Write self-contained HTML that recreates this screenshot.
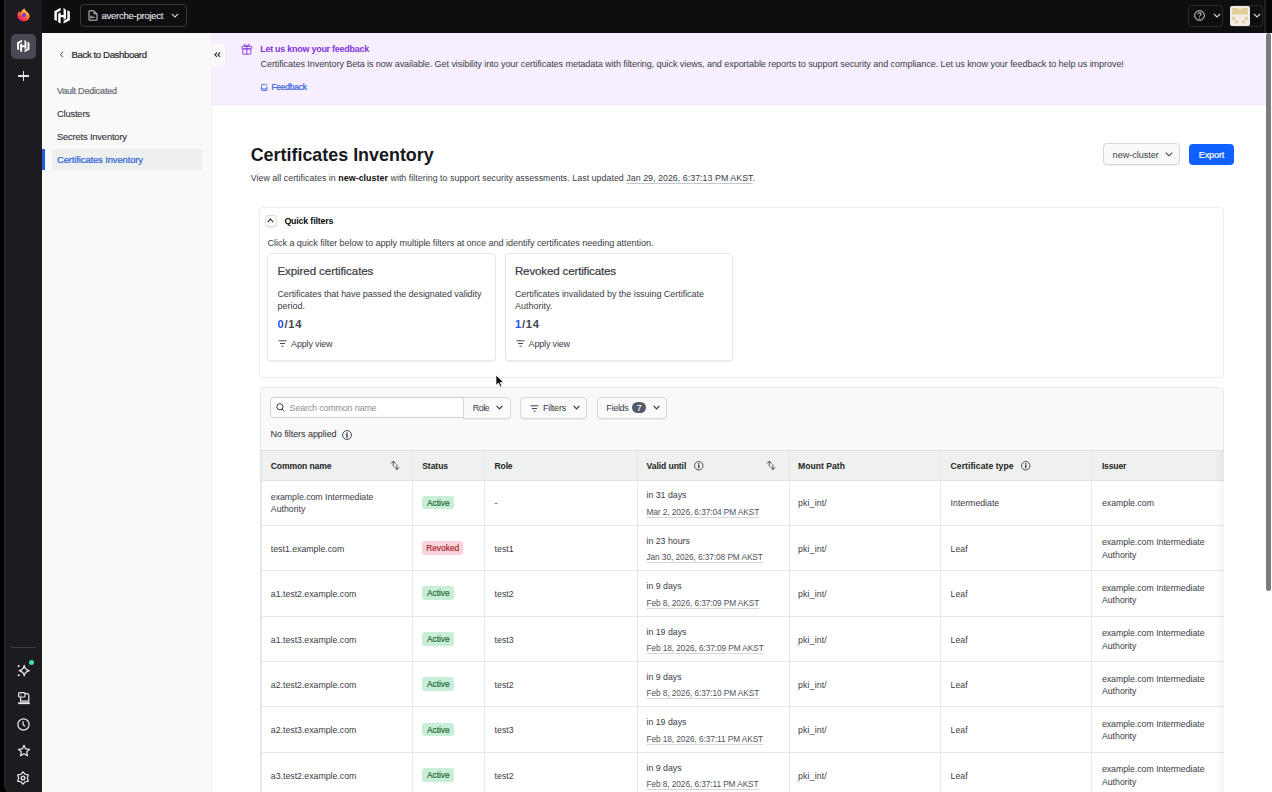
<!DOCTYPE html>
<html><head><meta charset="utf-8"><style>
html,body{margin:0;padding:0;}
body{width:1272px;height:792px;overflow:hidden;position:relative;background:#fff;font-family:"Liberation Sans",sans-serif;}
.r{position:absolute;}
.t{position:absolute;white-space:nowrap;}
.badge{border-radius:3px;font-size:8.4px;line-height:15.8px;text-align:center;-webkit-text-stroke-width:0.16px;letter-spacing:0px;}
</style></head><body>
<div class="r" style="left:0px;top:0px;width:42.00px;height:792.00px;background:#000"></div>
<div class="r" style="left:4px;top:-20px;width:38.00px;height:817.00px;background:#1c1b20;border-left:1px solid #2a2c28;border-bottom-left-radius:13px;box-sizing:border-box"></div>
<svg class="r" style="left:17px;top:8.3px" width="13" height="14" viewBox="0 0 13 14">
<defs><linearGradient id="ff" x1="0.85" y1="0.1" x2="0.3" y2="1"><stop offset="0" stop-color="#ffe95a"/><stop offset="0.4" stop-color="#ff8a2a"/><stop offset="0.75" stop-color="#ff3850"/><stop offset="1" stop-color="#d0105e"/></linearGradient></defs>
<path d="M6.5 13.4 C3 13.4 0.4 10.8 0.4 7.6 C0.4 5.6 1.2 4.2 2.2 3.3 C2.6 4.1 3.2 4.6 3.8 4.7 C4.2 3 5.6 1.3 7.6 0.4 C7.6 1.5 8.3 2.4 9.6 3.4 C11.4 4.7 12.6 6.2 12.6 8.2 C12.6 11.2 10 13.4 6.5 13.4Z" fill="url(#ff)"/>
<circle cx="6.9" cy="6.9" r="2.2" fill="#7b3ad8"/><path d="M3.8 6.8 C4.2 5.6 5.2 5 6.2 5.1 C5.4 5.6 5 6.3 5 7.2Z" fill="#ff8a2e"/></svg>
<div class="r" style="left:11px;top:34px;width:25.00px;height:25.00px;background:#4b4a52;border-radius:5px"></div>
<svg class="r" style="left:15.9px;top:39.2px" width="14.6" height="13.6" viewBox="0 0 32 32" preserveAspectRatio="none"><g fill="#fff">
<path d="M13.4 1.6 L2.4 7.9 V24.1 L6.8 26.6 V10.5 L13.4 6.7 Z"/>
<path d="M18.6 1.6 V15 H13.4 V10.1 L9.1 12.6 V28.7 L13.4 31.2 V19.2 H18.6 V24.2 L22.9 21.7 V5.6 Z"/>
<path d="M18.6 31.2 L29.6 24.9 V8.7 L25.2 6.2 V22.3 L18.6 26.1 Z"/>
</g></svg>
<div class="r" style="left:18.3px;top:75.3px;width:10.40px;height:1.30px;background:#e4e4e7"></div>
<div class="r" style="left:22.85px;top:70.9px;width:1.30px;height:10.30px;background:#e4e4e7"></div>
<div class="r" style="left:11px;top:647px;width:25.00px;height:1.00px;background:#3c3b42"></div>
<svg class="r" style="left:17px;top:664px" width="14" height="14" viewBox="0 0 14 14" fill="none" stroke="#ececef" stroke-width="1.2" stroke-linejoin="round">
<path d="M7.2 1.3 Q7.8 5.6 12.3 6.6 Q7.8 7.6 7.2 12 Q6.6 7.6 2.2 6.6 Q6.6 5.6 7.2 1.3Z"/><circle cx="1.7" cy="2" r="1.05" fill="#ececef" stroke="none"/><circle cx="1.7" cy="11.3" r="1.05" fill="#ececef" stroke="none"/></svg>
<div class="r" style="left:29px;top:660px;width:5px;height:5px;border-radius:50%;background:#43e0a0"></div>
<svg class="r" style="left:17px;top:691px" width="14" height="14" viewBox="0 0 14 14" fill="none" stroke="#ececef" stroke-width="1.2" stroke-linejoin="round">
<rect x="1.6" y="1.6" width="6.4" height="4.4" rx="1"/><path d="M8 2.6 H10.2 Q11.8 2.6 11.8 4.2 V10.2 H3.6 V6"/><circle cx="4" cy="3.8" r="0.6" fill="#ececef" stroke="none"/><path d="M1.2 12.2 H12.8" stroke-width="1.9"/></svg>
<svg class="r" style="left:16.5px;top:717.8px" width="13" height="13" viewBox="0 0 13 13" fill="none" stroke="#ececef" stroke-width="1.2">
<circle cx="6.5" cy="6.5" r="5.6"/><path d="M6.1 3.3 V6.7 L8.2 8.4"/></svg>
<svg class="r" style="left:16.5px;top:744px" width="14" height="14" viewBox="0 0 14 14" fill="none" stroke="#ececef" stroke-width="1.2" stroke-linejoin="round">
<path d="M7 1.3 L8.7 4.9 L12.6 5.3 L9.7 7.9 L10.5 11.8 L7 9.8 L3.5 11.8 L4.3 7.9 L1.4 5.3 L5.3 4.9Z"/></svg>
<svg class="r" style="left:16.2px;top:770.5px" width="14" height="14" viewBox="0 0 14 14" fill="none" stroke="#ececef" stroke-width="1.2" stroke-linejoin="round">
<path d="M7.00 0.80 L9.18 3.23 L12.37 3.90 L11.35 7.00 L12.37 10.10 L9.18 10.77 L7.00 13.20 L4.83 10.77 L1.63 10.10 L2.65 7.00 L1.63 3.90 L4.82 3.23Z"/><circle cx="7" cy="7" r="1.9"/><circle cx="7" cy="7" r="0.5" fill="#ececef" stroke="none"/></svg>
<div class="r" style="left:42px;top:0px;width:1230.00px;height:33.00px;background:#0e0e11"></div>
<svg class="r" style="left:53.3px;top:6.95px" width="18.2" height="16.9" viewBox="0 0 32 32" preserveAspectRatio="none"><g fill="#fff">
<path d="M13.4 1.6 L2.4 7.9 V24.1 L6.8 26.6 V10.5 L13.4 6.7 Z"/>
<path d="M18.6 1.6 V15 H13.4 V10.1 L9.1 12.6 V28.7 L13.4 31.2 V19.2 H18.6 V24.2 L22.9 21.7 V5.6 Z"/>
<path d="M18.6 31.2 L29.6 24.9 V8.7 L25.2 6.2 V22.3 L18.6 26.1 Z"/>
</g></svg>
<div class="r" style="left:80px;top:4px;width:107.00px;height:23.00px;border:1px solid #38383e;border-radius:4px;box-sizing:border-box"></div>
<svg class="r" style="left:88px;top:10px" width="10" height="11" viewBox="0 0 10 11" fill="none" stroke="#c9c9cf" stroke-width="1">
<path d="M1 0.8 H6 L9 3.8 V10.2 H1Z"/><path d="M6 0.8 V3.8 H9"/><path d="M3 5.6 V8.6 M3 7.2 H6.8"/></svg>
<div class="t " style="left:101.5px;top:9.07px;font-size:9.6px;line-height:13px;color:#e8e8eb;font-weight:normal;letter-spacing:-0.294px;-webkit-text-stroke-width:0.08px;">averche-project</div>
<svg class="r" style="left:171px;top:13px" width="8" height="5" viewBox="0 0 8 5" fill="none" stroke="#d8d8dc" stroke-width="1.1"><path d="M0.8 0.8 L4 4 L7.2 0.8"/></svg>
<div class="r" style="left:1188px;top:5px;width:34.50px;height:21.50px;border:1px solid #2a2a2f;border-radius:4px;box-sizing:border-box"></div>
<svg class="r" style="left:1193.5px;top:10.3px" width="11" height="11" viewBox="0 0 11 11" fill="none" stroke="#e8e8ea" stroke-width="1">
<circle cx="5.5" cy="5.5" r="4.8"/><path d="M3.9 4.2 Q4 2.7 5.5 2.7 Q7.1 2.7 7.1 4.1 Q7.1 5 6 5.5 Q5.5 5.8 5.5 6.6"/><circle cx="5.5" cy="8.2" r="0.5" fill="#e8e8ea" stroke="none"/></svg>
<svg class="r" style="left:1213px;top:12.8px" width="8" height="5" viewBox="0 0 8 5" fill="none" stroke="#e0e0e4" stroke-width="1.1"><path d="M0.8 0.8 L4 4 L7.2 0.8"/></svg>
<div class="r" style="left:1229.5px;top:5px;width:33.50px;height:21.50px;border:1px solid #2a2a2f;border-radius:4px;box-sizing:border-box"></div>
<svg class="r" style="left:1230px;top:5.5px" width="20" height="20" viewBox="0 0 20 20">
<rect width="20" height="20" rx="2" fill="#efece6"/><path d="M2 2 H8.5 V3.6 H11.5 V2 H18 V8.5 H2Z" fill="#e0cf98"/>
<rect x="2" y="11" width="3" height="3" fill="#e0cf98"/><rect x="15" y="11" width="3" height="3" fill="#e0cf98"/><rect x="5" y="14.3" width="3" height="3" fill="#e0cf98"/><rect x="12" y="14.3" width="3" height="3" fill="#e0cf98"/></svg>
<svg class="r" style="left:1253px;top:12.8px" width="8" height="5" viewBox="0 0 8 5" fill="none" stroke="#e0e0e4" stroke-width="1.1"><path d="M0.8 0.8 L4 4 L7.2 0.8"/></svg>
<div class="r" style="left:42px;top:33px;width:170.00px;height:759.00px;background:#f9f9f9"></div>
<div class="r" style="left:211px;top:33px;width:1.00px;height:759.00px;background:#f1f1f2"></div>
<svg class="r" style="left:59px;top:51px" width="5" height="7" viewBox="0 0 5 7" fill="none" stroke="#3b3d45" stroke-width="1"><path d="M4.2 0.6 L1.2 3.5 L4.2 6.4"/></svg>
<div class="t " style="left:71.5px;top:48.17px;font-size:9.6px;line-height:13px;color:#2b2d33;font-weight:normal;letter-spacing:-0.381px;-webkit-text-stroke-width:0.22px;">Back to Dashboard</div>
<div class="t " style="left:57px;top:84.88px;font-size:9.0px;line-height:13px;color:#686c76;font-weight:normal;letter-spacing:-0.205px;-webkit-text-stroke-width:0.22px;">Vault Dedicated</div>
<div class="t " style="left:57px;top:107.44px;font-size:9.4px;line-height:13px;color:#33353c;font-weight:normal;letter-spacing:-0.198px;-webkit-text-stroke-width:0.12px;">Clusters</div>
<div class="t " style="left:57px;top:129.64px;font-size:9.4px;line-height:13px;color:#33353c;font-weight:normal;letter-spacing:-0.184px;-webkit-text-stroke-width:0.12px;">Secrets Inventory</div>
<div class="r" style="left:52px;top:149px;width:150.00px;height:21.30px;background:#eeefef;border-radius:3px"></div>
<div class="r" style="left:42px;top:149px;width:2.60px;height:21.30px;background:#2459d8"></div>
<div class="t " style="left:57px;top:153.34px;font-size:9.4px;line-height:13px;color:#2a62d8;font-weight:normal;letter-spacing:-0.098px;-webkit-text-stroke-width:0.22px;">Certificates Inventory</div>
<div class="r" style="left:212px;top:33px;width:1060.00px;height:72.00px;background:#f7efff;border-bottom:1px solid #f1e4fc;box-sizing:border-box"></div>
<div class="r" style="left:211px;top:43.5px;width:14.00px;height:22.00px;background:#f9f9f9;border-radius:0 4px 4px 0;box-shadow:0.5px 0 0 #eee"></div>
<svg class="r" style="left:214.4px;top:51.7px" width="7" height="6" viewBox="0 0 7 6" fill="none" stroke="#2f3138" stroke-width="1.1"><path d="M3.1 0.5 L0.8 2.7 L3.1 4.9 M6.2 0.5 L3.9 2.7 L6.2 4.9"/></svg>
<svg class="r" style="left:240.8px;top:43.3px" width="12" height="12" viewBox="0 0 12 12" fill="none" stroke="#8a3ade" stroke-width="0.95">
<rect x="0.9" y="3.4" width="9.8" height="2.5" rx="0.5"/><rect x="1.7" y="5.9" width="8.2" height="5.3" rx="0.5"/><path d="M5.8 3.4 V11.2"/><path d="M5.8 3.4 C4.6 1.2 3.1 0.9 3.1 2.1 C3.1 3 4.5 3.4 5.8 3.4 C7.1 3.4 8.5 3 8.5 2.1 C8.5 0.9 7 1.2 5.8 3.4"/></svg>
<div class="t " style="left:260.2px;top:42.68px;font-size:9.0px;line-height:13px;color:#8434d8;font-weight:bold;letter-spacing:-0.272px;">Let us know your feedback</div>
<div class="t " style="left:260.5px;top:57.55px;font-size:9.1px;line-height:13px;color:#3b3d45;font-weight:normal;letter-spacing:-0.094px;">Certificates Inventory Beta is now available. Get visibility into your certificates metadata with filtering, quick views, and exportable reports to support security and compliance. Let us know your feedback to help us improve!</div>
<svg class="r" style="left:260.8px;top:83.8px" width="7" height="7" viewBox="0 0 7 7" fill="none" stroke="#3b68d8" stroke-width="0.9">
<path d="M4.3 0.5 H1.2 Q0.5 0.5 0.5 1.2 V5.8 Q0.5 6.5 1.2 6.5 H5.2 Q5.9 6.5 5.9 5.8 V2.4"/><path d="M0.5 4.9 H5.9"/><circle cx="5.6" cy="0.9" r="0.6" fill="#3b68d8" stroke="none"/></svg>
<div class="t " style="left:271.4px;top:81.29px;font-size:8.4px;line-height:12px;color:#2f62dc;font-weight:normal;letter-spacing:-0.183px;-webkit-text-stroke-width:0.22px;">Feedback</div>
<div class="t " style="left:250.7px;top:143.40px;font-size:17.9px;line-height:25px;color:#17181b;font-weight:bold;letter-spacing:0.003px;">Certificates Inventory</div>
<div class="t " style="left:250.7px;top:171.63px;font-size:8.85px;line-height:12px;color:#3b3d45;font-weight:normal;letter-spacing:0.03px">View all certificates in <b style="color:#0c0c0e;letter-spacing:0.05px">new-cluster</b> with filtering to support security assessments. Last updated <span style="text-decoration:underline solid #c6c8cd;text-decoration-thickness:1px;text-underline-offset:1.6px">Jan 29, 2026, 6:37:13 PM AKST</span>.</div>
<div class="r" style="left:1103px;top:143px;width:77.00px;height:22.30px;background:#f9f9f9;border:1px solid #d6d7db;border-radius:4px;box-sizing:border-box;box-shadow:0 1px 1px rgba(0,0,0,.05)"></div>
<div class="t " style="left:1112.6px;top:148.71px;font-size:9.2px;line-height:13px;color:#3b3d45;font-weight:normal;letter-spacing:-0.067px;">new-cluster</div>
<svg class="r" style="left:1165px;top:151.8px" width="8" height="5" viewBox="0 0 8 5" fill="none" stroke="#3b3d45" stroke-width="1.05"><path d="M0.8 0.6 L4 3.8 L7.2 0.6"/></svg>
<div class="r" style="left:1189px;top:143.5px;width:45.00px;height:21.50px;background:#1060ff;border-radius:4px"></div>
<div class="t " style="left:1198.8px;top:149.28px;font-size:9.0px;line-height:13px;color:#ffffff;font-weight:normal;letter-spacing:-0.102px;-webkit-text-stroke-width:0.22px;">Export</div>
<div class="r" style="left:259.2px;top:207.3px;width:964.80px;height:170.70px;border:1px solid #ececee;border-radius:4px;box-sizing:border-box;background:#fff"></div>
<div class="r" style="left:264.5px;top:214.5px;width:12.50px;height:12.20px;border:1px solid #dcdde1;border-radius:3px;box-sizing:border-box;background:#fafafa;box-shadow:0 1px 1px rgba(0,0,0,.06)"></div>
<svg class="r" style="left:267.2px;top:218.2px" width="7" height="5" viewBox="0 0 7 5" fill="none" stroke="#33353c" stroke-width="1.1"><path d="M0.7 4.1 L3.5 1.1 L6.3 4.1"/></svg>
<div class="t " style="left:284.4px;top:215.12px;font-size:8.9px;line-height:12px;color:#0c0c0e;font-weight:bold;letter-spacing:-0.191px;">Quick filters</div>
<div class="t " style="left:267.5px;top:236.75px;font-size:9.1px;line-height:13px;color:#3b3d45;font-weight:normal;letter-spacing:-0.055px;">Click a quick filter below to apply multiple filters at once and identify certificates needing attention.</div>
<div class="r" style="left:267px;top:253px;width:228.50px;height:108.40px;border:1px solid #e6e7ea;border-radius:4px;box-sizing:border-box;background:#fff;box-shadow:0 1px 2px rgba(0,0,0,.07)"></div>
<div class="t " style="left:277.4px;top:263.18px;font-size:11.6px;line-height:16px;color:#3b3d45;font-weight:normal;letter-spacing:-0.102px;-webkit-text-stroke-width:0.22px;">Expired certificates</div>
<div class="t " style="left:277.4px;top:287.98px;font-size:9.0px;line-height:13px;color:#3b3d45;font-weight:normal;letter-spacing:-0.070px;">Certificates that have passed the designated validity</div>
<div class="t " style="left:277.4px;top:300.18px;font-size:9.0px;line-height:13px;color:#3b3d45;font-weight:normal;">period.</div>
<div class="t " style="left:277.4px;top:316.12px;font-size:11.2px;line-height:16px;color:#44464e;font-weight:bold;letter-spacing:0.75px"><span style="color:#2257e0">0</span>/14</div>
<svg class="r" style="left:278px;top:340px" width="9" height="7" viewBox="0 0 9 7" fill="none" stroke="#3b3d45" stroke-width="0.95"><path d="M0.5 0.8 H8.5 M2 3.5 H7 M3.5 6.2 H5.5"/></svg>
<div class="t " style="left:291.1px;top:338.18px;font-size:9.0px;line-height:13px;color:#3b3d45;font-weight:normal;letter-spacing:-0.169px;">Apply view</div>
<div class="r" style="left:504.5px;top:253px;width:228.50px;height:108.40px;border:1px solid #e6e7ea;border-radius:4px;box-sizing:border-box;background:#fff;box-shadow:0 1px 2px rgba(0,0,0,.07)"></div>
<div class="t " style="left:514.9px;top:263.18px;font-size:11.6px;line-height:16px;color:#3b3d45;font-weight:normal;letter-spacing:-0.168px;-webkit-text-stroke-width:0.22px;">Revoked certificates</div>
<div class="t " style="left:514.9px;top:287.98px;font-size:9.0px;line-height:13px;color:#3b3d45;font-weight:normal;letter-spacing:-0.040px;">Certificates invalidated by the issuing Certificate</div>
<div class="t " style="left:514.9px;top:300.18px;font-size:9.0px;line-height:13px;color:#3b3d45;font-weight:normal;">Authority.</div>
<div class="t " style="left:514.9px;top:316.12px;font-size:11.2px;line-height:16px;color:#44464e;font-weight:bold;letter-spacing:0.75px"><span style="color:#2257e0">1</span>/14</div>
<svg class="r" style="left:515.5px;top:340px" width="9" height="7" viewBox="0 0 9 7" fill="none" stroke="#3b3d45" stroke-width="0.95"><path d="M0.5 0.8 H8.5 M2 3.5 H7 M3.5 6.2 H5.5"/></svg>
<div class="t " style="left:528.6px;top:338.18px;font-size:9.0px;line-height:13px;color:#3b3d45;font-weight:normal;letter-spacing:-0.169px;">Apply view</div>
<div class="r" style="left:260px;top:386.6px;width:964.00px;height:413.40px;background:#f9f9fa;border:1px solid #e6e7ea;border-radius:4px;box-sizing:border-box"></div>
<div class="r" style="left:270px;top:397.3px;width:194.00px;height:20.70px;background:#fff;border:1px solid #ccced3;border-radius:4px 0 0 4px;box-sizing:border-box"></div>
<svg class="r" style="left:275.5px;top:403.3px" width="9" height="9" viewBox="0 0 9 9" fill="none" stroke="#3b3d45" stroke-width="1"><circle cx="3.9" cy="3.8" r="3.1"/><path d="M6.1 6 L8.1 8" stroke-linecap="round"/></svg>
<div class="t " style="left:289.6px;top:402.28px;font-size:9.0px;line-height:13px;color:#8c909a;font-weight:normal;letter-spacing:-0.208px;">Search common name</div>
<div class="r" style="left:463.3px;top:397px;width:47.50px;height:22.00px;background:#fafafa;border:1px solid #d8d9de;border-radius:0 4px 4px 0;box-sizing:border-box;box-shadow:0 1px 1px rgba(0,0,0,.06)"></div>
<div class="t " style="left:472.8px;top:401.68px;font-size:9.0px;line-height:13px;color:#3b3d45;font-weight:normal;letter-spacing:-0.570px;">Role</div>
<svg class="r" style="left:496px;top:405.3px" width="7" height="5" viewBox="0 0 7 5" fill="none" stroke="#3b3d45" stroke-width="1.2"><path d="M0.6 0.8 L3.5 3.8 L6.4 0.8"/></svg>
<div class="r" style="left:520.4px;top:397px;width:67.10px;height:22.00px;background:#fafafa;border:1px solid #d8d9de;border-radius:4px;box-sizing:border-box;box-shadow:0 1px 1px rgba(0,0,0,.06)"></div>
<svg class="r" style="left:530px;top:404.5px" width="9" height="7" viewBox="0 0 9 7" fill="none" stroke="#3b3d45" stroke-width="0.95"><path d="M0.5 0.8 H8.5 M2 3.5 H7 M3.5 6.2 H5.5"/></svg>
<div class="t " style="left:542.9px;top:401.68px;font-size:9.0px;line-height:13px;color:#3b3d45;font-weight:normal;letter-spacing:-0.200px;">Filters</div>
<svg class="r" style="left:572.8px;top:405.3px" width="7" height="5" viewBox="0 0 7 5" fill="none" stroke="#3b3d45" stroke-width="1.2"><path d="M0.6 0.8 L3.5 3.8 L6.4 0.8"/></svg>
<div class="r" style="left:596.5px;top:397px;width:70.00px;height:22.00px;background:#fafafa;border:1px solid #d8d9de;border-radius:4px;box-sizing:border-box;box-shadow:0 1px 1px rgba(0,0,0,.06)"></div>
<div class="t " style="left:606.3px;top:401.68px;font-size:9.0px;line-height:13px;color:#3b3d45;font-weight:normal;letter-spacing:-0.301px;">Fields</div>
<div class="r" style="left:632.3px;top:402.2px;width:14px;height:11.3px;border-radius:6px;background:#535b6b;color:#fff;font-size:8.8px;line-height:12px;text-align:center;-webkit-text-stroke-width:0.1px">7</div>
<svg class="r" style="left:652.6px;top:405.3px" width="7" height="5" viewBox="0 0 7 5" fill="none" stroke="#3b3d45" stroke-width="1.2"><path d="M0.6 0.8 L3.5 3.8 L6.4 0.8"/></svg>
<div class="t " style="left:270.6px;top:428.38px;font-size:9.0px;line-height:13px;color:#2b2d33;font-weight:normal;letter-spacing:-0.061px;">No filters applied</div>
<svg class="r" style="left:341.5px;top:429.5px" width="10" height="10" viewBox="0 0 10 10" fill="none" stroke="#3b3d45" stroke-width="0.95"><circle cx="5" cy="5" r="4.45"/><path d="M5 4.5 V7.2" stroke-width="1.45" stroke-linecap="round"/><circle cx="5" cy="2.9" r="0.75" fill="#3b3d45" stroke="none"/></svg>
<div class="r" style="left:261px;top:450.5px;width:963.00px;height:29.50px;background:#eff0f0"></div>
<div class="r" style="left:261px;top:480px;width:963.00px;height:320.00px;background:#fff"></div>
<div class="r" style="left:260.5px;top:450px;width:963.50px;height:1.00px;background:#dfe0e3"></div>
<div class="r" style="left:260.5px;top:479.5px;width:963.50px;height:1.00px;background:#dfe0e3"></div>
<div class="r" style="left:260.5px;top:524.7px;width:963.50px;height:1.00px;background:#e6e7ea"></div>
<div class="r" style="left:260.5px;top:570.0px;width:963.50px;height:1.00px;background:#e6e7ea"></div>
<div class="r" style="left:260.5px;top:615.7px;width:963.50px;height:1.00px;background:#e6e7ea"></div>
<div class="r" style="left:260.5px;top:661.0px;width:963.50px;height:1.00px;background:#e6e7ea"></div>
<div class="r" style="left:260.5px;top:706.3px;width:963.50px;height:1.00px;background:#e6e7ea"></div>
<div class="r" style="left:260.5px;top:751.6px;width:963.50px;height:1.00px;background:#e6e7ea"></div>
<div class="r" style="left:411.5px;top:450.5px;width:1.00px;height:349.50px;background:#e6e7ea"></div>
<div class="r" style="left:484.3px;top:450.5px;width:1.00px;height:349.50px;background:#e6e7ea"></div>
<div class="r" style="left:636.5px;top:450.5px;width:1.00px;height:349.50px;background:#e6e7ea"></div>
<div class="r" style="left:788.5px;top:450.5px;width:1.00px;height:349.50px;background:#e6e7ea"></div>
<div class="r" style="left:939.7px;top:450.5px;width:1.00px;height:349.50px;background:#e6e7ea"></div>
<div class="r" style="left:1091.3px;top:450.5px;width:1.00px;height:349.50px;background:#e6e7ea"></div>
<div class="r" style="left:260.5px;top:450.5px;width:1.00px;height:349.50px;background:#e6e7ea"></div>
<div class="t " style="left:270.8px;top:459.92px;font-size:8.6px;line-height:12px;color:#1d1e22;font-weight:bold;letter-spacing:-0.137px;">Common name</div>
<div class="t " style="left:422.2px;top:459.92px;font-size:8.6px;line-height:12px;color:#1d1e22;font-weight:bold;letter-spacing:-0.073px;">Status</div>
<div class="t " style="left:494.6px;top:459.92px;font-size:8.6px;line-height:12px;color:#1d1e22;font-weight:bold;letter-spacing:-0.208px;">Role</div>
<div class="t " style="left:646.5px;top:459.92px;font-size:8.6px;line-height:12px;color:#1d1e22;font-weight:bold;letter-spacing:-0.078px;">Valid until</div>
<div class="t " style="left:798.1px;top:459.92px;font-size:8.6px;line-height:12px;color:#1d1e22;font-weight:bold;letter-spacing:0.002px;">Mount Path</div>
<div class="t " style="left:950.6px;top:459.92px;font-size:8.6px;line-height:12px;color:#1d1e22;font-weight:bold;letter-spacing:0.054px;">Certificate type</div>
<div class="t " style="left:1101.9px;top:459.92px;font-size:8.6px;line-height:12px;color:#1d1e22;font-weight:bold;letter-spacing:-0.164px;">Issuer</div>
<svg class="r" style="left:389.5px;top:460px" width="10" height="10" viewBox="0 0 10 10" fill="none" stroke="#4a4c53" stroke-width="1.0" stroke-linejoin="round" stroke-linecap="round"><path d="M3.3 1.3 V6.1 M1.3 3.2 L3.3 1.1 L5.3 3.2 M6.9 4.9 V9.4 M4.9 7.5 L6.9 9.6 L8.9 7.5"/></svg>
<svg class="r" style="left:765.5px;top:460px" width="10" height="10" viewBox="0 0 10 10" fill="none" stroke="#4a4c53" stroke-width="1.0" stroke-linejoin="round" stroke-linecap="round"><path d="M3.3 1.3 V6.1 M1.3 3.2 L3.3 1.1 L5.3 3.2 M6.9 4.9 V9.4 M4.9 7.5 L6.9 9.6 L8.9 7.5"/></svg>
<svg class="r" style="left:694px;top:461.1px" width="9.5" height="9.5" viewBox="0 0 10 10" fill="none" stroke="#3b3d45" stroke-width="0.95"><circle cx="5" cy="5" r="4.45"/><path d="M5 4.5 V7.2" stroke-width="1.45" stroke-linecap="round"/><circle cx="5" cy="2.9" r="0.75" fill="#3b3d45" stroke="none"/></svg>
<svg class="r" style="left:1021.3px;top:461.1px" width="9.5" height="9.5" viewBox="0 0 10 10" fill="none" stroke="#3b3d45" stroke-width="0.95"><circle cx="5" cy="5" r="4.45"/><path d="M5 4.5 V7.2" stroke-width="1.45" stroke-linecap="round"/><circle cx="5" cy="2.9" r="0.75" fill="#3b3d45" stroke="none"/></svg>
<div class="t " style="left:270.8px;top:491.17px;font-size:8.75px;line-height:12px;color:#3b3d45;font-weight:normal;letter-spacing:-0.018px;">example.com Intermediate</div>
<div class="t " style="left:270.8px;top:503.37px;font-size:8.75px;line-height:12px;color:#3b3d45;font-weight:normal;">Authority</div>
<div class="r badge" style="left:422.2px;top:495.70px;width:32.2px;height:13.8px;background:#c9eed7;color:#17652f">Active</div>
<div class="t " style="left:494.6px;top:497.47px;font-size:8.75px;line-height:12px;color:#3b3d45;font-weight:normal;">-</div>
<div class="t " style="left:646.5px;top:489.37px;font-size:8.75px;line-height:12px;color:#3b3d45;font-weight:normal;">in 31 days</div>
<div class="t " style="left:646.5px;top:505.92px;font-size:8.3px;line-height:12px;color:#50525a;font-weight:normal;letter-spacing:-0.078px;text-decoration:underline solid #d5d7db;text-decoration-thickness:1px;text-underline-offset:1.6px">Mar 2, 2026, 6:37:04 PM AKST</div>
<div class="t " style="left:798.1px;top:497.47px;font-size:8.75px;line-height:12px;color:#3b3d45;font-weight:normal;letter-spacing:0.139px;">pki_int/</div>
<div class="t " style="left:950.6px;top:497.47px;font-size:8.75px;line-height:12px;color:#3b3d45;font-weight:normal;">Intermediate</div>
<div class="t " style="left:1101.9px;top:497.47px;font-size:8.75px;line-height:12px;color:#3b3d45;font-weight:normal;">example.com</div>
<div class="t " style="left:270.8px;top:542.72px;font-size:8.75px;line-height:12px;color:#3b3d45;font-weight:normal;">test1.example.com</div>
<div class="r badge" style="left:422.2px;top:540.95px;width:41px;height:13.8px;background:#f9d3d7;color:#a3242e">Revoked</div>
<div class="t " style="left:494.6px;top:542.72px;font-size:8.75px;line-height:12px;color:#3b3d45;font-weight:normal;">test1</div>
<div class="t " style="left:646.5px;top:534.62px;font-size:8.75px;line-height:12px;color:#3b3d45;font-weight:normal;">in 23 hours</div>
<div class="t " style="left:646.5px;top:551.17px;font-size:8.3px;line-height:12px;color:#50525a;font-weight:normal;letter-spacing:-0.077px;text-decoration:underline solid #d5d7db;text-decoration-thickness:1px;text-underline-offset:1.6px">Jan 30, 2026, 6:37:08 PM AKST</div>
<div class="t " style="left:798.1px;top:542.72px;font-size:8.75px;line-height:12px;color:#3b3d45;font-weight:normal;letter-spacing:0.139px;">pki_int/</div>
<div class="t " style="left:950.6px;top:542.72px;font-size:8.75px;line-height:12px;color:#3b3d45;font-weight:normal;">Leaf</div>
<div class="t " style="left:1101.9px;top:536.42px;font-size:8.75px;line-height:12px;color:#3b3d45;font-weight:normal;letter-spacing:-0.018px;">example.com Intermediate</div>
<div class="t " style="left:1101.9px;top:548.62px;font-size:8.75px;line-height:12px;color:#3b3d45;font-weight:normal;">Authority</div>
<div class="t " style="left:270.8px;top:588.22px;font-size:8.75px;line-height:12px;color:#3b3d45;font-weight:normal;">a1.test2.example.com</div>
<div class="r badge" style="left:422.2px;top:586.45px;width:32.2px;height:13.8px;background:#c9eed7;color:#17652f">Active</div>
<div class="t " style="left:494.6px;top:588.22px;font-size:8.75px;line-height:12px;color:#3b3d45;font-weight:normal;">test2</div>
<div class="t " style="left:646.5px;top:580.12px;font-size:8.75px;line-height:12px;color:#3b3d45;font-weight:normal;">in 9 days</div>
<div class="t " style="left:646.5px;top:596.67px;font-size:8.3px;line-height:12px;color:#50525a;font-weight:normal;letter-spacing:-0.078px;text-decoration:underline solid #d5d7db;text-decoration-thickness:1px;text-underline-offset:1.6px">Feb 8, 2026, 6:37:09 PM AKST</div>
<div class="t " style="left:798.1px;top:588.22px;font-size:8.75px;line-height:12px;color:#3b3d45;font-weight:normal;letter-spacing:0.139px;">pki_int/</div>
<div class="t " style="left:950.6px;top:588.22px;font-size:8.75px;line-height:12px;color:#3b3d45;font-weight:normal;">Leaf</div>
<div class="t " style="left:1101.9px;top:581.92px;font-size:8.75px;line-height:12px;color:#3b3d45;font-weight:normal;letter-spacing:-0.018px;">example.com Intermediate</div>
<div class="t " style="left:1101.9px;top:594.12px;font-size:8.75px;line-height:12px;color:#3b3d45;font-weight:normal;">Authority</div>
<div class="t " style="left:270.8px;top:633.72px;font-size:8.75px;line-height:12px;color:#3b3d45;font-weight:normal;">a1.test3.example.com</div>
<div class="r badge" style="left:422.2px;top:631.95px;width:32.2px;height:13.8px;background:#c9eed7;color:#17652f">Active</div>
<div class="t " style="left:494.6px;top:633.72px;font-size:8.75px;line-height:12px;color:#3b3d45;font-weight:normal;">test3</div>
<div class="t " style="left:646.5px;top:625.62px;font-size:8.75px;line-height:12px;color:#3b3d45;font-weight:normal;">in 19 days</div>
<div class="t " style="left:646.5px;top:642.17px;font-size:8.3px;line-height:12px;color:#50525a;font-weight:normal;letter-spacing:-0.078px;text-decoration:underline solid #d5d7db;text-decoration-thickness:1px;text-underline-offset:1.6px">Feb 18, 2026, 6:37:09 PM AKST</div>
<div class="t " style="left:798.1px;top:633.72px;font-size:8.75px;line-height:12px;color:#3b3d45;font-weight:normal;letter-spacing:0.139px;">pki_int/</div>
<div class="t " style="left:950.6px;top:633.72px;font-size:8.75px;line-height:12px;color:#3b3d45;font-weight:normal;">Leaf</div>
<div class="t " style="left:1101.9px;top:627.42px;font-size:8.75px;line-height:12px;color:#3b3d45;font-weight:normal;letter-spacing:-0.018px;">example.com Intermediate</div>
<div class="t " style="left:1101.9px;top:639.62px;font-size:8.75px;line-height:12px;color:#3b3d45;font-weight:normal;">Authority</div>
<div class="t " style="left:270.8px;top:679.02px;font-size:8.75px;line-height:12px;color:#3b3d45;font-weight:normal;">a2.test2.example.com</div>
<div class="r badge" style="left:422.2px;top:677.25px;width:32.2px;height:13.8px;background:#c9eed7;color:#17652f">Active</div>
<div class="t " style="left:494.6px;top:679.02px;font-size:8.75px;line-height:12px;color:#3b3d45;font-weight:normal;">test2</div>
<div class="t " style="left:646.5px;top:670.92px;font-size:8.75px;line-height:12px;color:#3b3d45;font-weight:normal;">in 9 days</div>
<div class="t " style="left:646.5px;top:687.47px;font-size:8.3px;line-height:12px;color:#50525a;font-weight:normal;letter-spacing:-0.078px;text-decoration:underline solid #d5d7db;text-decoration-thickness:1px;text-underline-offset:1.6px">Feb 8, 2026, 6:37:10 PM AKST</div>
<div class="t " style="left:798.1px;top:679.02px;font-size:8.75px;line-height:12px;color:#3b3d45;font-weight:normal;letter-spacing:0.139px;">pki_int/</div>
<div class="t " style="left:950.6px;top:679.02px;font-size:8.75px;line-height:12px;color:#3b3d45;font-weight:normal;">Leaf</div>
<div class="t " style="left:1101.9px;top:672.72px;font-size:8.75px;line-height:12px;color:#3b3d45;font-weight:normal;letter-spacing:-0.018px;">example.com Intermediate</div>
<div class="t " style="left:1101.9px;top:684.92px;font-size:8.75px;line-height:12px;color:#3b3d45;font-weight:normal;">Authority</div>
<div class="t " style="left:270.8px;top:724.32px;font-size:8.75px;line-height:12px;color:#3b3d45;font-weight:normal;">a2.test3.example.com</div>
<div class="r badge" style="left:422.2px;top:722.55px;width:32.2px;height:13.8px;background:#c9eed7;color:#17652f">Active</div>
<div class="t " style="left:494.6px;top:724.32px;font-size:8.75px;line-height:12px;color:#3b3d45;font-weight:normal;">test3</div>
<div class="t " style="left:646.5px;top:716.22px;font-size:8.75px;line-height:12px;color:#3b3d45;font-weight:normal;">in 19 days</div>
<div class="t " style="left:646.5px;top:732.77px;font-size:8.3px;line-height:12px;color:#50525a;font-weight:normal;letter-spacing:-0.077px;text-decoration:underline solid #d5d7db;text-decoration-thickness:1px;text-underline-offset:1.6px">Feb 18, 2026, 6:37:11 PM AKST</div>
<div class="t " style="left:798.1px;top:724.32px;font-size:8.75px;line-height:12px;color:#3b3d45;font-weight:normal;letter-spacing:0.139px;">pki_int/</div>
<div class="t " style="left:950.6px;top:724.32px;font-size:8.75px;line-height:12px;color:#3b3d45;font-weight:normal;">Leaf</div>
<div class="t " style="left:1101.9px;top:718.02px;font-size:8.75px;line-height:12px;color:#3b3d45;font-weight:normal;letter-spacing:-0.018px;">example.com Intermediate</div>
<div class="t " style="left:1101.9px;top:730.22px;font-size:8.75px;line-height:12px;color:#3b3d45;font-weight:normal;">Authority</div>
<div class="t " style="left:270.8px;top:769.62px;font-size:8.75px;line-height:12px;color:#3b3d45;font-weight:normal;">a3.test2.example.com</div>
<div class="r badge" style="left:422.2px;top:767.85px;width:32.2px;height:13.8px;background:#c9eed7;color:#17652f">Active</div>
<div class="t " style="left:494.6px;top:769.62px;font-size:8.75px;line-height:12px;color:#3b3d45;font-weight:normal;">test2</div>
<div class="t " style="left:646.5px;top:761.52px;font-size:8.75px;line-height:12px;color:#3b3d45;font-weight:normal;">in 9 days</div>
<div class="t " style="left:646.5px;top:778.07px;font-size:8.3px;line-height:12px;color:#50525a;font-weight:normal;letter-spacing:-0.077px;text-decoration:underline solid #d5d7db;text-decoration-thickness:1px;text-underline-offset:1.6px">Feb 8, 2026, 6:37:11 PM AKST</div>
<div class="t " style="left:798.1px;top:769.62px;font-size:8.75px;line-height:12px;color:#3b3d45;font-weight:normal;letter-spacing:0.139px;">pki_int/</div>
<div class="t " style="left:950.6px;top:769.62px;font-size:8.75px;line-height:12px;color:#3b3d45;font-weight:normal;">Leaf</div>
<div class="t " style="left:1101.9px;top:763.32px;font-size:8.75px;line-height:12px;color:#3b3d45;font-weight:normal;letter-spacing:-0.018px;">example.com Intermediate</div>
<div class="t " style="left:1101.9px;top:775.52px;font-size:8.75px;line-height:12px;color:#3b3d45;font-weight:normal;">Authority</div>
<div class="r" style="left:1214px;top:450.5px;width:10.00px;height:349.50px;background:linear-gradient(to right,rgba(0,0,0,0),rgba(0,0,0,.035))"></div>
<div class="r" style="left:1266px;top:33px;width:6.00px;height:759.00px;background:#fff"></div>
<div class="r" style="left:1264px;top:0px;width:2.00px;height:33.00px;background:#222226"></div>
<div class="r" style="left:1266px;top:0px;width:6.00px;height:33.00px;background:#08080a"></div>
<div class="r" style="left:1266.2px;top:33px;width:5.00px;height:558.00px;background:#7b7b7d;border-radius:3px"></div>
<svg class="r" style="left:494.6px;top:374.2px" width="10" height="14" viewBox="0 0 10 14"><path d="M1 1 V11.3 L3.5 9 L5.3 12.9 L6.9 12.2 L5.2 8.5 L8.6 8.5 Z" fill="#0a0a0a" stroke="#fff" stroke-width="0.7" stroke-linejoin="round"/></svg>
</body></html>
